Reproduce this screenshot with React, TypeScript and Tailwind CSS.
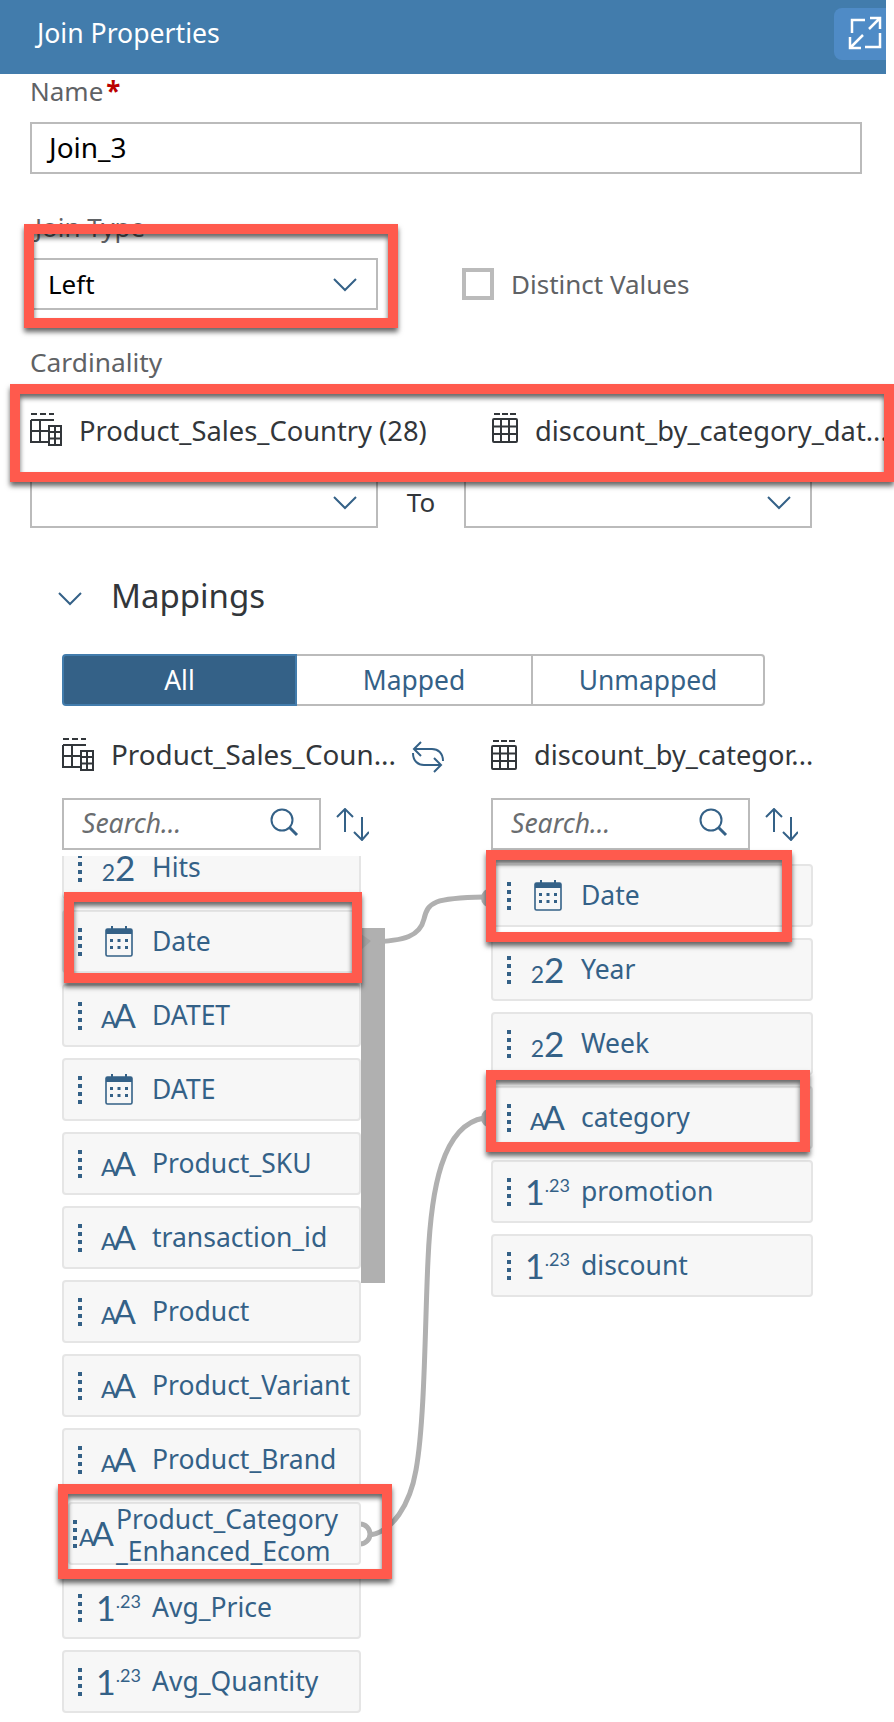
import type { ReactNode } from 'react'

type FieldType = 'int' | 'date' | 'text' | 'dec'

const leftRows: { label: string; type: FieldType }[] = [
  { label: 'Hits', type: 'int' },
  { label: 'Date', type: 'date' },
  { label: 'DATET', type: 'text' },
  { label: 'DATE', type: 'date' },
  { label: 'Product_SKU', type: 'text' },
  { label: 'transaction_id', type: 'text' },
  { label: 'Product', type: 'text' },
  { label: 'Product_Variant', type: 'text' },
  { label: 'Product_Brand', type: 'text' },
]

const rightRows: { label: string; type: FieldType }[] = [
  { label: 'Date', type: 'date' },
  { label: 'Year', type: 'int' },
  { label: 'Week', type: 'int' },
  { label: 'category', type: 'text' },
  { label: 'promotion', type: 'dec' },
  { label: 'discount', type: 'dec' },
]

function Chevron() {
  return (
    <svg width="26" height="15" viewBox="0 0 26 15" fill="none" stroke="#346187" strokeWidth="2">
      <path d="M2 2 L13 13 L24 2" />
    </svg>
  )
}

function DoubleTable() {
  return (
    <svg width="32" height="33" viewBox="0 0 32 33" fill="none" stroke="#32363a" strokeWidth="2" className="shrink-0">
      <path d="M1 1 H7 M10 1 H16 M19 1 H24" />
      <path d="M1 7 H24 M1 7 V29 H19 M1 18 H19 M10 7 V29 M1 7 H19" />
      <path d="M19 13 H31 V32 H19 Z M19 19 H31 M19 25.5 H31 M25 13 V32" />
    </svg>
  )
}

function SingleTable() {
  return (
    <svg width="26" height="30" viewBox="0 0 26 30" fill="none" stroke="#32363a" strokeWidth="2" className="shrink-0">
      <path d="M2 1 H8 M10 1 H16 M18 1 H24" />
      <rect x="1" y="6" width="24" height="23" rx="1" />
      <path d="M1 13.5 H25 M1 21 H25 M9 6 V29 M17 6 V29" />
    </svg>
  )
}

function SearchBox() {
  return (
    <div className="flex h-[52px] w-[259px] items-center border-2 border-[#bbbbbb] bg-white pb-[2px] pl-[18px]">
      <span className="flex-1 text-[26.5px] leading-none text-[#6a6d70] italic">Search...</span>
      <svg width="30" height="30" viewBox="0 0 30 30" fill="none" stroke="#346187" className="mr-[19px]">
        <circle cx="12" cy="12" r="10.5" strokeWidth="2" />
        <path d="M19.5 19.5 L27 27" strokeWidth="3" />
      </svg>
    </div>
  )
}

function SortIcon() {
  return (
    <svg width="33" height="33" viewBox="0 0 33 33" fill="none" stroke="#346187" strokeWidth="2">
      <path d="M9 1 V24 M1 9 L9 1 L17 9" />
      <path d="M26 9 V32 M18 24 L26 32 L33 24" />
    </svg>
  )
}

function Dots() {
  return (
    <span className="flex w-[4px] shrink-0 flex-col gap-[4px]">
      <i className="h-[4px] w-[4px] bg-[#346187]" />
      <i className="h-[4px] w-[4px] bg-[#346187]" />
      <i className="h-[4px] w-[4px] bg-[#346187]" />
      <i className="h-[4px] w-[4px] bg-[#346187]" />
    </span>
  )
}

function Calendar() {
  return (
    <svg width="28" height="31" viewBox="0 0 28 31" fill="none">
      <rect x="1" y="3" width="26" height="27" rx="1.5" stroke="#346187" strokeWidth="1.6" />
      <path d="M1 3 H27 V8 H1 Z" fill="#346187" />
      <path d="M7 0 V4 M21 0 V4" stroke="#346187" strokeWidth="2" />
      <g fill="#346187">
        <rect x="5" y="13" width="3" height="3" />
        <rect x="12.5" y="13" width="3" height="3" />
        <rect x="20" y="13" width="3" height="3" />
        <rect x="5" y="20" width="3" height="3" />
        <rect x="12.5" y="20" width="3" height="3" />
        <rect x="20" y="20" width="3" height="3" />
      </g>
    </svg>
  )
}

function TypeIcon({ type }: { type: FieldType }) {
  if (type === 'date') return <Calendar />
  if (type === 'int') {
    return (
      <span className="flex items-baseline font-['Lato',sans-serif] leading-none">
        <span className="text-[23px]">2</span>
        <span className="text-[35px]">2</span>
      </span>
    )
  }
  if (type === 'text') {
    return (
      <span className="flex items-baseline font-['Lato',sans-serif] leading-none">
        <span className="text-[23px]">A</span>
        <span className="-ml-[3px] text-[33px]">A</span>
      </span>
    )
  }
  return (
    <span className="flex items-start font-['Lato',sans-serif] leading-none">
      <span className="text-[34px]">1</span>
      <span className="mt-[1px] text-[18px]">.23</span>
    </span>
  )
}

function Row({ label, type, wide }: { label: string; type: FieldType; wide?: boolean }) {
  return (
    <div className={`flex h-[63px] shrink-0 items-center rounded border-2 border-[#e5e5e5] bg-[#f7f7f7] pl-[14px] text-[#346187] ${wide ? 'w-[322px]' : 'w-[299px]'}`}>
      <Dots />
      <span className="flex w-[70px] shrink-0 justify-center pl-[3px]">
        <TypeIcon type={type} />
      </span>
      <span className="text-[26.5px] leading-none whitespace-nowrap">{label}</span>
    </div>
  )
}

function Select({ children }: { children?: ReactNode }) {
  return (
    <div className="flex h-[52px] w-[348px] items-center justify-between border-2 border-[#bbbbbb] bg-white pr-[18px] pl-[16px] text-[26px] leading-none text-black">
      <span>{children}</span>
      <Chevron />
    </div>
  )
}

export default function App() {
  return (
    <div className="relative h-[1722px] w-[894px] overflow-hidden bg-white font-['Noto_Sans',sans-serif]">
      {/* connector lines sit under the rows */}
      <svg width="894" height="1722" viewBox="0 0 894 1722" fill="none" className="absolute top-0 left-0">
        <rect x="361" y="928" width="24" height="355" fill="#b0b0b0" />
        <path d="M361 934 L371 941 L361 950 Z" fill="#a2a2a2" />
        <g stroke="#b0b0b0" strokeWidth="5">
          <path d="M371 942 C 405 941, 420 936, 424 919 C 428 902, 434 898, 484 897" />
          <path d="M370 1535 C 392 1532, 410 1505, 416 1470 C 425 1420, 425 1320, 428 1260 C 431 1190, 442 1125, 484 1118" />
          <circle cx="360" cy="1534" r="10" />
        </g>
        <circle cx="491" cy="898" r="10" fill="#b0b0b0" />
        <circle cx="491" cy="1118" r="10" fill="#b0b0b0" />
      </svg>

      <div className="relative">
        {/* Header */}
        <header className="flex h-[74px] w-[886px] items-start justify-between bg-[#427cac] pl-[37px] text-white">
          <h1 className="mt-[15px] text-[26.6px] leading-[36px]">Join Properties</h1>
          <button className="mt-[8px] flex h-[52px] w-[52px] items-center justify-center rounded-l-lg bg-[#4f8bc6]">
            <svg width="36" height="36" viewBox="0 0 36 36" fill="none" stroke="white" strokeWidth="2.5" className="ml-[12px]">
              <path d="M4 17 V4 H17 M32 17 V31 H17" />
              <path d="M21 13 L32 2 M22 2 H32 V13 M15 19 L2 32 M2 21 V32 H13" />
            </svg>
          </button>
        </header>

        <div className="pl-[30px]">
          {/* Name */}
          <div className="flex h-[48px] items-start pt-[3px] text-[26px] leading-[28px] text-[#5f6265]">
            Name<span className="ml-[3px] font-bold text-[#bb0000]">*</span>
          </div>
          <div className="flex h-[52px] w-[832px] items-center border-2 border-[#bbbbbb] bg-white pb-[2px] pl-[17px] text-[28px] leading-none text-black">
            Join_3
          </div>

          {/* Join type */}
          <div className="flex h-[84px] items-end pb-[17px] pl-[5px] text-[26px] leading-[28px] text-[#5f6265]">Join Type</div>
          <div className="flex items-center">
            <Select>Left</Select>
            <span className="ml-[84px] h-[32px] w-[32px] border-4 border-[#bbbbbb]" />
            <span className="ml-[17px] text-[26px] leading-none text-[#5f6265]">Distinct Values</span>
          </div>

          {/* Cardinality */}
          <div className="flex h-[74px] items-start pt-[38px] text-[26.3px] leading-[28px] text-[#5f6265]">Cardinality</div>
          <div className="flex h-[92px] items-start pt-[29px] text-[27.3px] leading-[36px] text-[#32363a]">
            <DoubleTable />
            <span className="ml-[17px] w-[413px] whitespace-nowrap">Product_Sales_Country (28)</span>
            <SingleTable />
            <span className="ml-[17px] w-[349px] whitespace-nowrap">discount_by_category_dat...</span>
          </div>
          <div className="flex items-center">
            <Select />
            <span className="w-[86px] text-center text-[26px] leading-none text-[#32363a]">To</span>
            <Select />
          </div>
        </div>

        {/* Mappings */}
        <div className="flex h-[126px] items-start pt-[48px] pl-[57px]">
          <span className="pt-[15px]">
            <Chevron />
          </span>
          <h2 className="ml-[28px] text-[33px] leading-[40px] text-[#32363a]">Mappings</h2>
        </div>

        <div className="pl-[62px]">
          <div className="flex h-[52px] w-[703px] text-[26.4px] leading-none">
            <div className="flex w-[235px] items-center justify-center rounded-l border-2 border-[#427cac] bg-[#346187] text-white">All</div>
            <div className="flex w-[234px] items-center justify-center border-y-2 border-[#bbbbbb] text-[#346187]">Mapped</div>
            <div className="flex w-[234px] items-center justify-center rounded-r border-2 border-[#bbbbbb] text-[#346187]">Unmapped</div>
          </div>

          <div className="mt-[32px] flex">
            {/* Left source */}
            <div className="w-[429px]">
              <div className="flex h-[33px] items-center text-[27.8px] leading-none text-[#32363a]">
                <DoubleTable />
                <span className="ml-[17px] w-[301px] whitespace-nowrap">Product_Sales_Coun...</span>
                <svg width="32" height="33" viewBox="0 0 32 33" fill="none" stroke="#346187" strokeWidth="2" className="mt-[5px]">
                  <path d="M31 20 C 31 12, 26 8, 20 8 H 2 M9 1 L2 8 L9 15" />
                  <path d="M1 12 C 1 20, 6 24, 12 24 H 29 M22 17 L29 24 L22 31" />
                </svg>
              </div>
              <div className="mt-[27px] flex items-center gap-[15px]">
                <SearchBox />
                <SortIcon />
              </div>
              <div className="mt-[6px] h-[866px] overflow-hidden">
                <div className="-mt-[20px] flex flex-col gap-[11px]">
                  {leftRows.map((r) => (
                    <Row key={r.label + r.type} label={r.label} type={r.type} />
                  ))}
                  <div className="ml-[6px] flex h-[63px] w-[293px] shrink-0 items-center rounded border-2 border-[#e5e5e5] bg-[#f7f7f7] pl-[3px] text-[#346187]">
                    <Dots />
                    <span className="ml-[2px] w-[37px] shrink-0">
                      <TypeIcon type="text" />
                    </span>
                    <span className="pt-[2px] text-[26.5px] leading-[32px] whitespace-nowrap">
                      Product_Category
                      <br />
                      _Enhanced_Ecom
                    </span>
                  </div>
                  <Row label="Avg_Price" type="dec" />
                  <Row label="Avg_Quantity" type="dec" />
                </div>
              </div>
            </div>

            {/* Right source */}
            <div className="w-[340px]">
              <div className="flex h-[33px] items-center text-[27.2px] leading-none text-[#32363a]">
                <SingleTable />
                <span className="ml-[17px] whitespace-nowrap">discount_by_categor...</span>
              </div>
              <div className="mt-[27px] flex items-center gap-[15px]">
                <SearchBox />
                <SortIcon />
              </div>
              <div className="mt-[14px] flex flex-col gap-[11px]">
                {rightRows.map((r) => (
                  <Row key={r.label} label={r.label} type={r.type} wide />
                ))}
              </div>
            </div>
          </div>
        </div>
      </div>

      {/* Red annotation frames */}
      <div className="absolute top-[224px] left-[24px] h-[104px] w-[374px] border-[10px] border-[#ff5a4d] shadow-[0_4px_5px_rgba(0,0,0,0.6),inset_0_4px_5px_rgba(0,0,0,0.6)]" />
      <div className="absolute top-[384px] left-[10px] h-[98px] w-[884px] border-[10px] border-[#ff5a4d] shadow-[0_4px_5px_rgba(0,0,0,0.6),inset_0_4px_5px_rgba(0,0,0,0.6)]" />
      <div className="absolute top-[892px] left-[64px] h-[91px] w-[298px] border-[10px] border-[#ff5a4d] shadow-[0_4px_5px_rgba(0,0,0,0.6),inset_0_4px_5px_rgba(0,0,0,0.6)]" />
      <div className="absolute top-[850px] left-[486px] h-[92px] w-[306px] border-[10px] border-[#ff5a4d] shadow-[0_4px_5px_rgba(0,0,0,0.6),inset_0_4px_5px_rgba(0,0,0,0.6)]" />
      <div className="absolute top-[1070px] left-[486px] h-[82px] w-[324px] border-[10px] border-[#ff5a4d] shadow-[0_4px_5px_rgba(0,0,0,0.6),inset_0_4px_5px_rgba(0,0,0,0.6)]" />
      <div className="absolute top-[1484px] left-[58px] h-[95px] w-[334px] border-[10px] border-[#ff5a4d] shadow-[0_4px_5px_rgba(0,0,0,0.6),inset_0_4px_5px_rgba(0,0,0,0.6)]" />
    </div>
  )
}
